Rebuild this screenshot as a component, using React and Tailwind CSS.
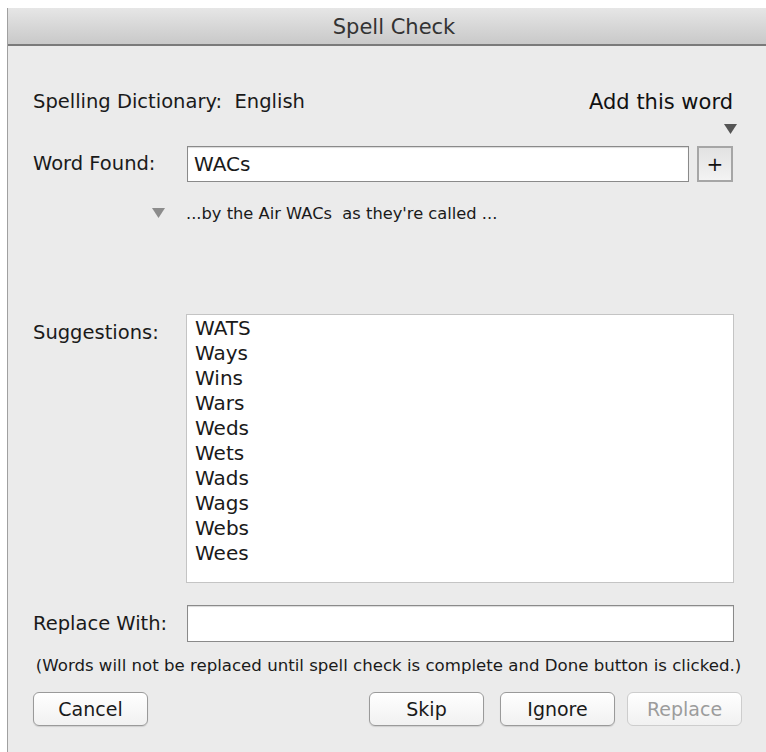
import React from "react";

const suggestions = ["WATS", "Ways", "Wins", "Wars", "Weds", "Wets", "Wads", "Wags", "Webs", "Wees"];

function DownTriangle({ className }) {
  return (
    <svg width="13" height="10" viewBox="0 0 13 10" className={className}>
      <polygon points="0,0 13,0 6.5,10" fill="currentColor" />
    </svg>
  );
}

function Button({ children, disabled, className = "" }) {
  return (
    <button
      className={
        "h-[34px] w-[115px] rounded-[6px] border text-[19px] leading-none bg-gradient-to-b from-white to-[#f1f1f1] " +
        (disabled
          ? "border-[#cdcdcd] text-[#9c9c9c]"
          : "border-[#9a9a9a] text-[#1a1a1a] shadow-[0_1px_1px_rgba(0,0,0,0.12)]") +
        " " +
        className
      }
    >
      {children}
    </button>
  );
}

export default function App() {
  return (
    <div
      className="w-[766px] h-[752px] overflow-hidden bg-white pt-[8px] pl-[7px]"
      style={{ fontFamily: '"DejaVu Sans", sans-serif' }}
    >
      <div className="h-[744px] w-[800px] border-l border-[#a0a0a0] bg-[#ebebeb] flex flex-col">
        {/* title bar */}
        <div className="h-[38px] border-b-2 border-[#7a7a7a] bg-gradient-to-b from-[#e6e6e6] to-[#c9c9c9] flex items-center">
          <div className="w-[772px] text-center text-[21px] text-[#333] pt-[3px]">Spell Check</div>
        </div>

        {/* dialog body */}
        <div className="w-[726px] ml-[25px] flex flex-col text-[#1a1a1a]">
          <div className="mt-[43px] flex items-start justify-between h-[26px]">
            <div className="text-[19.5px] leading-[26px]">
              Spelling Dictionary:&nbsp;&nbsp;English
            </div>
            <div className="text-[21px] leading-[26px] mr-[26px] text-[#111]">Add this word</div>
          </div>
          <div className="flex justify-end mr-[22px] mt-[9px] text-[#555]">
            <DownTriangle />
          </div>
          <div className="mt-[12px] flex items-center">
            <div className="w-[154px] text-[19.5px]">Word Found:</div>
            <div className="w-[502px] h-[36px] bg-white border border-[#8a8a8a] shadow-[inset_0_1px_1px_rgba(0,0,0,0.15)] flex items-center pl-[6px] text-[20px]">
              WACs
            </div>
            <div className="ml-[8px] w-[36px] h-[36px] border-2 border-[#a6a6a6] bg-gradient-to-b from-[#e2e2e2] to-[#f3f3f3] flex items-center justify-center text-[20px] leading-none text-[#111]">
              +
            </div>
          </div>
          <div className="mt-[20px] flex items-center">
            <div className="w-[153px] flex justify-end pr-[21px] text-[#8c8c8c]">
              <DownTriangle />
            </div>
            <div className="text-[16.3px] leading-[20px] pt-[2px]">...by the Air WACs&nbsp;&nbsp;as they're called ...</div>
          </div>

          <div className="mt-[90px] flex items-start">
            <div className="w-[153px] text-[19.5px] pt-[4px]">Suggestions:</div>
            <div className="w-[548px] h-[269px] bg-white border border-[#c4c4c4] pl-[8px] pt-[1px]">
              {suggestions.map((s) => (
                <div key={s} className="text-[20px] leading-[25px]">
                  {s}
                </div>
              ))}
            </div>
          </div>

          <div className="mt-[22px] flex items-center">
            <div className="w-[154px] text-[19.5px]">Replace With:</div>
            <div className="w-[547px] h-[37px] bg-white border border-[#8a8a8a] shadow-[inset_0_1px_1px_rgba(0,0,0,0.15)]" />
          </div>

          <div className="mt-[13px] text-[16.6px] leading-[22px] text-center w-[711px]">
            (Words will not be replaced until spell check is complete and Done button is clicked.)
          </div>

          <div className="mt-[15px] flex items-center w-[709px]">
            <Button>Cancel</Button>
            <div className="flex-1" />
            <Button>Skip</Button>
            <Button className="ml-[16px]">Ignore</Button>
            <Button disabled className="ml-[12px]">Replace</Button>
          </div>
        </div>
      </div>
    </div>
  );
}
